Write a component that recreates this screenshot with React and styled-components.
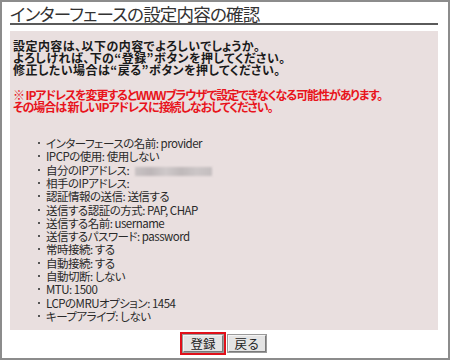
import React from "react";
import styled, { createGlobalStyle } from "styled-components";

const GlobalStyle = createGlobalStyle`
  html, body { margin: 0; padding: 0; background: #fff; }
  body {
    font-family: "Noto Sans CJK JP", "Noto Sans", sans-serif;
    font-feature-settings: "palt" 1;
  }
`;

const Frame = styled.div`
  box-sizing: border-box;
  width: 450px;
  height: 360px;
  border: 2px solid #8c8c8c;
  padding: 0 10px 0 8px;
  background: #fff;
  display: flex;
  flex-direction: column;
`;

const Title = styled.h1`
  margin: 0;
  padding: 3px 0 0 0;
  font-size: 17.5px;
  font-weight: 400;
  letter-spacing: -0.8px;
  line-height: 18px;
  color: #333;
  border-bottom: 2px solid #5a5a5a;
`;

const Panel = styled.div`
  margin-top: 6px;
  height: 299px;
  box-sizing: border-box;
  background: #e9dfdf;
  padding: 9px 3px 0 3px;
`;

const Para = styled.p`
  margin: ${(p) => p.$mt || 0}px 0 0 0;
  font-size: 12px;
  line-height: 12.2px;
  font-weight: 700;
  letter-spacing: ${(p) => (p.$red ? -1.1 : 0.45)}px;
  color: ${(p) => (p.$red ? "#e8141c" : "#1a1a1a")};
`;

const List = styled.ul`
  list-style: none;
  margin: 24px 0 0 0;
  padding: 0 0 0 33px;
`;

const Item = styled.li`
  position: relative;
  font-size: 11.5px;
  line-height: 13.3px;
  letter-spacing: -0.5px;
  color: #2a2a2a;
  &::before {
    content: "";
    position: absolute;
    left: -8px;
    top: 5px;
    width: 2px;
    height: 2px;
    background: #555;
  }
`;

const Masked = styled.span`
  display: inline-block;
  vertical-align: middle;
  width: 77px;
  height: 9px;
  margin-left: 4px;
  background: linear-gradient(90deg, #c9c3c4 0%, #bdb6b8 20%, #cfc9ca 40%, #bfb9ba 60%, #ccc6c7 80%, #c4bebf 100%);
  filter: blur(0.8px);
`;

const ButtonRow = styled.div`
  display: flex;
  justify-content: center;
  align-items: center;
  gap: 2px;
  padding-top: 2px;
  padding-right: 2px;
`;

const FocusRing = styled.span`
  display: inline-flex;
  border: 3px solid #e0101a;
`;

const Button = styled.button`
  font-family: "Noto Sans CJK JP", sans-serif;
  font-size: 12.5px;
  line-height: 14px;
  height: 17px;
  padding: 0;
  background: #e4e4e4;
  color: #222;
  border: 1px solid;
  border-color: #f4f4f4 #7a7a7a #7a7a7a #f4f4f4;
  box-shadow: 0 0 0 1px #9a9a9a;
  width: ${(p) => p.$w}px;
  cursor: pointer;
`;

const items = [
  ["インターフェースの名前", "provider"],
  ["IPCPの使用", "使用しない"],
  ["自分のIPアドレス", null, true],
  ["相手のIPアドレス", ""],
  ["認証情報の送信", "送信する"],
  ["送信する認証の方式", "PAP, CHAP"],
  ["送信する名前", "username"],
  ["送信するパスワード", "password"],
  ["常時接続", "する"],
  ["自動接続", "する"],
  ["自動切断", "しない"],
  ["MTU", "1500"],
  ["LCPのMRUオプション", "1454"],
  ["キープアライブ", "しない"],
];

export default function App() {
  return (
    <>
      <GlobalStyle />
      <Frame>
        <Title>インターフェースの設定内容の確認</Title>
        <Panel>
          <Para>
            設定内容は、以下の内容でよろしいでしょうか。
            <br />
            よろしければ、下の“登録”ボタンを押してください。
            <br />
            修正したい場合は“戻る”ボタンを押してください。
          </Para>
          <Para $red $mt={12}>
            ※ IPアドレスを変更するとWWWブラウザで設定できなくなる可能性があります。
            <br />
            その場合は 新しいIPアドレスに接続しなおしてください。
          </Para>
          <List>
            {items.map(([k, v, masked]) => (
              <Item key={k}>
                {k}: {masked ? <Masked /> : v}
              </Item>
            ))}
          </List>
        </Panel>
        <ButtonRow>
          <FocusRing>
            <Button $w={40}>登録</Button>
          </FocusRing>
          <Button $w={38}>戻る</Button>
        </ButtonRow>
      </Frame>
    </>
  );
}
